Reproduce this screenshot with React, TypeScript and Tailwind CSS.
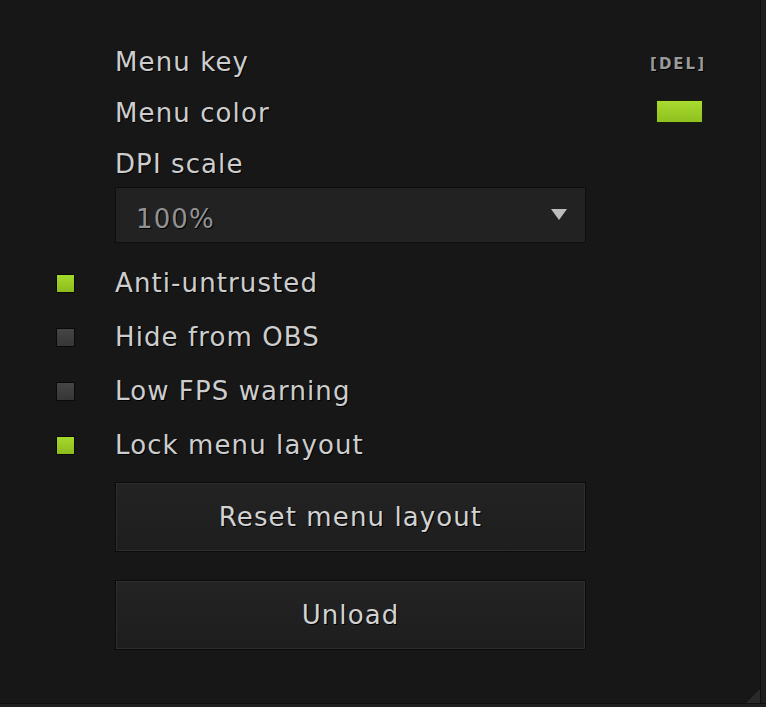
import React from "react";

const font = { fontFamily: '"DejaVu Sans", Verdana, sans-serif' };

function Checkbox({ on }: { on: boolean }) {
  return (
    <div
      className={
        "w-[19px] h-[19px] border border-[#0a0a0a] " +
        (on
          ? "bg-gradient-to-b from-[#a6d92c] to-[#8cbb1c]"
          : "bg-gradient-to-b from-[#454545] to-[#363636]")
      }
    />
  );
}

function CheckRow({ label, on }: { label: string; on: boolean }) {
  return (
    <div className="flex items-center h-[30px] mb-[24px]">
      <div className="w-[59px] flex items-center">
        <Checkbox on={on} />
      </div>
      <span className="text-[26px] leading-[30px] tracking-[1.1px] text-[#cdcdcd] [text-shadow:1px_1px_0_#000]">
        {label}
      </span>
    </div>
  );
}

function Button({ label }: { label: string }) {
  return (
    <div className="ml-[59px] w-[471px] h-[70px] border border-[#0b0b0b] bg-[#0b0b0b]">
      <div className="w-full h-full border border-[#2e2e2e] bg-gradient-to-b from-[#232323] to-[#1e1e1e] flex items-center justify-center">
        <span className="text-[26px] leading-[30px] tracking-[1.1px] text-[#d2d2d2] [text-shadow:1px_1px_0_#000]">
          {label}
        </span>
      </div>
    </div>
  );
}

export default function App() {
  return (
    <div className="w-[766px] h-[707px] bg-[#171717] relative overflow-hidden" style={font}>
      <div className="flex h-[703px]">
        <div className="flex-1 pl-[56px] pr-[54px] pt-[47px]">
          {/* Menu key */}
          <div className="flex items-start h-[30px] mb-[21px]">
            <div className="w-[59px]" />
            <span className="flex-1 text-[26px] leading-[30px] tracking-[1.1px] text-[#cdcdcd] [text-shadow:1px_1px_0_#000]">
              Menu key
            </span>
            <span className="mt-[8px] text-[15px] leading-[18px] font-bold tracking-[2px] text-[#9a9a9a] [text-shadow:1px_1px_0_#000]">
              [DEL]
            </span>
          </div>
          {/* Menu color */}
          <div className="flex items-center h-[30px] mb-[21px]">
            <div className="w-[59px]" />
            <span className="flex-1 text-[26px] leading-[30px] tracking-[1.1px] text-[#cdcdcd] [text-shadow:1px_1px_0_#000]">
              Menu color
            </span>
            <div className="w-[47px] h-[23px] mr-[3px] -mt-[3px] border border-[#1a1f0c] bg-gradient-to-b from-[#a9db30] to-[#8fc01e]" />
          </div>
          {/* DPI scale */}
          <div className="flex items-center h-[30px] mb-[8px]">
            <div className="w-[59px]" />
            <span className="text-[26px] leading-[30px] tracking-[1.1px] text-[#cdcdcd] [text-shadow:1px_1px_0_#000]">
              DPI scale
            </span>
          </div>
          {/* Dropdown */}
          <div className="ml-[59px] w-[471px] h-[56px] border border-[#0e0e0e] bg-[#222222] flex items-start justify-between pl-[20px] pr-[18px] pt-[16px] mb-[25px]">
            <span className="text-[26px] leading-[30px] tracking-[1.1px] text-[#929292] [text-shadow:1px_1px_0_#000]">
              100%
            </span>
            <svg width="16" height="11" viewBox="0 0 16 11" className="mt-[5px]">
              <polygon points="0,0 16,0 8,11" fill="#bdbdbd" />
            </svg>
          </div>
          <CheckRow label="Anti-untrusted" on={true} />
          <CheckRow label="Hide from OBS" on={false} />
          <CheckRow label="Low FPS warning" on={false} />
          <div className="flex items-center h-[30px] mb-[22px]">
            <div className="w-[59px] flex items-center">
              <Checkbox on={true} />
            </div>
            <span className="text-[26px] leading-[30px] tracking-[1.1px] text-[#cdcdcd] [text-shadow:1px_1px_0_#000]">
              Lock menu layout
            </span>
          </div>
          <Button label="Reset menu layout" />
          <div className="h-[28px]" />
          <Button label="Unload" />
        </div>
        {/* right edge */}
        <div className="w-[6px] h-full border-l border-[#0f0f0f] bg-[#1f1f1f]" />
      </div>
      {/* bottom edge */}
      <div className="h-[4px] border-t border-[#0f0f0f] bg-[#202020]" />
      {/* resize grip */}
      <svg className="absolute right-[6px] bottom-[4px]" width="14" height="14" viewBox="0 0 14 14">
        <polygon points="14,0 14,14 0,14" fill="#2a2a2a" />
      </svg>
    </div>
  );
}
